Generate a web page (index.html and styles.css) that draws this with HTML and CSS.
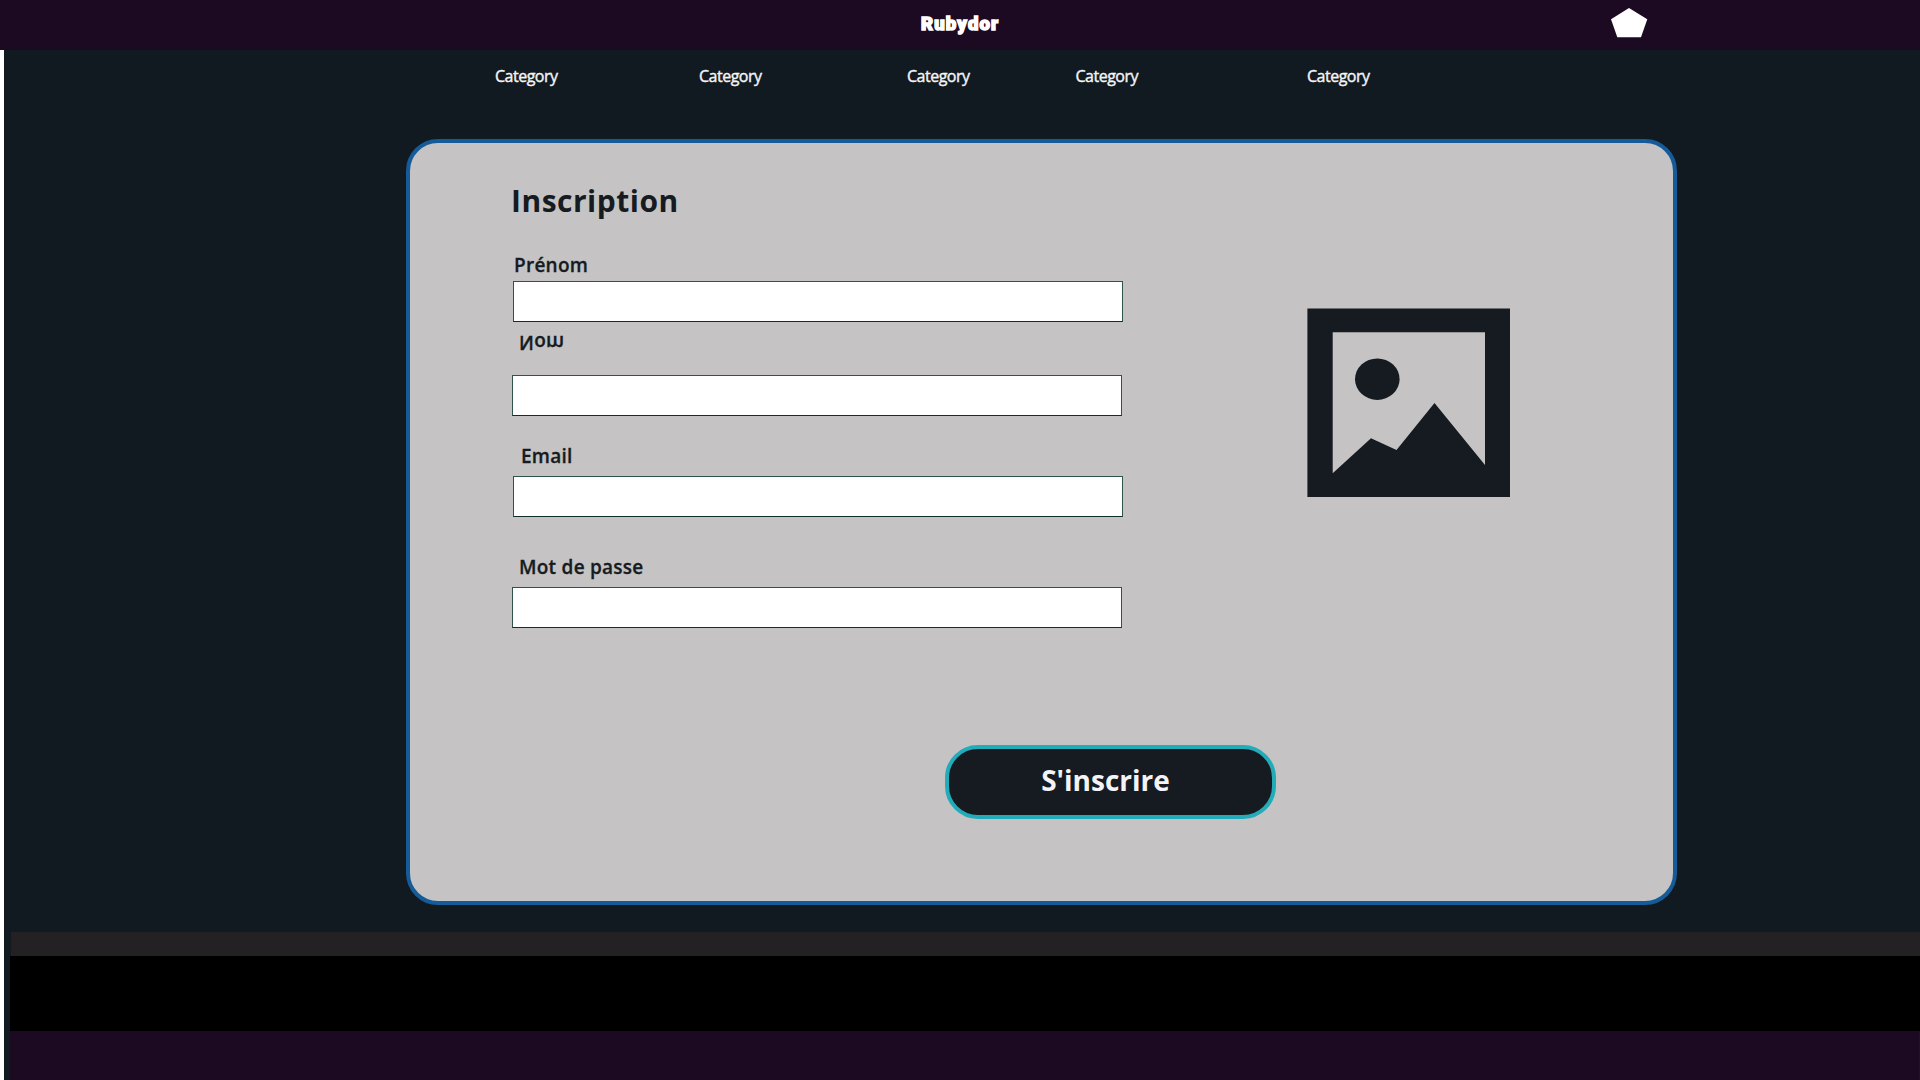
FILE: index.html
```html
<!DOCTYPE html>
<html lang="fr">
<head>
<meta charset="utf-8">
<title>Rubydor</title>
<link rel="stylesheet" href="styles.css">
</head>
<body>
<header class="topbar">
  <span class="logo">Rubydor</span>
  <svg class="badge" width="38" height="30" viewBox="0 0 38 30"><polygon points="19,0 37.3,11.2 31,29.3 7.3,29.3 1,11.2" fill="#fff"/></svg>
</header>
<div class="page">
  <nav class="categories">
    <a>Category</a><a>Category</a><a>Category</a><a>Category</a><a>Category</a>
  </nav>
  <main class="card">
    <form class="form">
      <h1 class="title">Inscription</h1>
      <label class="label first-name" for="f1">Prénom</label>
      <input class="input shifted" id="f1">
      <label class="label last-name" for="f2">Nom</label>
      <input class="input" id="f2">
      <label class="label email" for="f3">Email</label>
      <input class="input shifted" id="f3">
      <label class="label password" for="f4">Mot de passe</label>
      <input class="input" id="f4" type="password">
      <button class="submit" type="button">S'inscrire</button>
    </form>
    <svg class="picture" width="203" height="189" viewBox="0 0 203 189">
      <path fill="#161b21" fill-rule="evenodd" d="M.4.6H203V188.9H.4ZM25.7 24.2V165.3L64 130.3 89.5 142 127.5 95 178 157V24.2Z"/>
      <ellipse cx="70.3" cy="71.2" rx="22.3" ry="20.7" fill="#161b21"/>
    </svg>
  </main>
  <footer class="footer">
    <div class="band band-grey"></div>
    <div class="band band-black"></div>
    <div class="band band-purple"></div>
  </footer>
</div>
</body>
</html>
```
FILE: styles.css
```css
* { box-sizing: border-box; }
body {
  margin: 0;
  height: 1080px;
  overflow: hidden;
  background: #fff;
  font-family: "Open Sans", sans-serif;
  color: #161b21;
}
.topbar {
  display: flex;
  height: 50px;
  padding-left: 921px;
  background: #1c0922;
}
.logo {
  width: 689px;
  padding-top: 12px;
  font: 900 18.5px/24px Roboto, sans-serif;
  letter-spacing: 1.15px;
  color: #fff;
  -webkit-text-stroke: 1.5px #fff;
}
.badge { margin-top: 8px; }
.page {
  display: flex;
  flex-direction: column;
  height: 1030px;
  margin-left: 4px;
  background: #121a21;
}
.categories {
  display: grid;
  grid-template-columns: 204px 208px 168.5px 231.5px 100px;
  height: 89px;
  padding: 15px 0 0 491px;
  font-size: 16px;
  line-height: 22px;
  letter-spacing: -0.5px;
  color: #f4f5f6;
  -webkit-text-stroke: 0.4px #f4f5f6;
}
.card {
  display: flex;
  align-items: flex-start;
  width: 1271px;
  height: 766px;
  margin-left: 402px;
  border: 4px solid #155b99;
  border-radius: 32px;
  background: #c5c3c4;
}
.form {
  display: flex;
  flex-direction: column;
  align-items: flex-start;
  width: 897px;
  padding-left: 102px;
}
.title {
  margin: 37px 0 0 -1px;
  font-size: 30px;
  line-height: 42px;
  font-weight: 700;
  letter-spacing: 0.5px;
}
.label {
  font-size: 19px;
  line-height: 26px;
  font-weight: 600;
  letter-spacing: 0.25px;
  -webkit-text-stroke: 0.3px #161b21;
}
.input {
  width: 610px;
  height: 41px;
  border: 1px solid #30534b;
  border-bottom-color: #122e2c;
  background: #fff;
  padding: 0 10px;
  outline: 0;
}
.shifted { margin-left: 1px; }
.first-name { margin: 30px 0 3px 2px; }
.last-name { margin: 8px 0 19px 7px; transform: scaleY(-1); }
.email { margin: 27px 0 7px 9px; }
.password { margin: 37px 0 7px 7px; }
.submit {
  align-self: flex-end;
  width: 331px;
  height: 74px;
  margin: 117px 31px 0 0;
  padding: 0 10px 4px 0;
  border: 4px solid #22abb8;
  border-radius: 33px;
  background: #161b21;
  color: #f4f4f8;
  font: 700 28px/38px "Open Sans", sans-serif;
}
.picture { flex: none; margin-top: 165px; }
.footer { margin-top: 27px; padding-left: 6px; }
.band-grey { height: 24px; margin-left: 1px; background: #242124; }
.band-black { height: 75px; background: #000; }
.band-purple { height: 49px; margin-right: 1px; background: #1c0922; }
```
